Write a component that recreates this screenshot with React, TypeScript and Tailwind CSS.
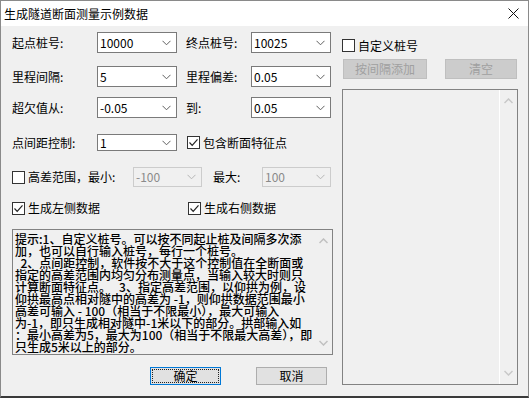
import React from "react";

const FONT = { fontFamily: '"Noto Sans CJK SC", "Noto Sans", sans-serif' };

function Chevron({ color = "#606060" }: { color?: string }) {
  return (
    <svg width="9" height="6" viewBox="0 0 9 6" className="shrink-0">
      <polyline points="0.5,0.8 4.5,4.8 8.5,0.8" fill="none" stroke={color} strokeWidth="1" />
    </svg>
  );
}

function Combo({ value, cls, disabled = false }: { value: string; cls: string; disabled?: boolean }) {
  return (
    <div
      className={
        "flex items-center justify-between pl-[2px] pr-[5px] border text-[12px] leading-none shrink-0 " +
        (disabled ? "border-[#cccccc] bg-[#f0f0f0] text-[#8a8a8a]" : "border-[#7a7a7a] bg-white text-black") +
        " " +
        cls
      }
    >
      <span>{value}</span>
      <Chevron color={disabled ? "#b5b5b5" : "#606060"} />
    </div>
  );
}

function Check({ checked }: { checked: boolean }) {
  return (
    <div className="w-[13px] h-[13px] border border-[#333333] bg-white flex items-center justify-center shrink-0">
      {checked && (
        <svg width="11" height="11" viewBox="0 0 11 11">
          <polyline points="1.5,5.5 4.2,8.3 9.5,2.3" fill="none" stroke="#222222" strokeWidth="1.2" />
        </svg>
      )}
    </div>
  );
}

function CheckLabel({ checked, text, cls = "" }: { checked: boolean; text: string; cls?: string }) {
  return (
    <div className={"flex items-center gap-[3px] text-[12px] leading-none text-black " + cls}>
      <Check checked={checked} />
      <span>{text}</span>
    </div>
  );
}

const tipLines = [
  "提示:1、自定义桩号。可以按不同起止桩及间隔多次添",
  "加，也可以自行输入桩号，每行一个桩号。",
  "  2、点间距控制，软件按不大于这个控制值在全断面或",
  "指定的高差范围内均匀分布测量点，当输入较大时则只",
  "计算断面特征点。   3、指定高差范围，以仰拱为例，设",
  "仰拱最高点相对隧中的高差为 -1，则仰拱数据范围最小",
  "高差可输入 - 100（相当于不限最小），最大可输入",
  "为-1，即只生成相对隧中-1米以下的部分。拱部输入如",
  "：最小高差为5，最大为100（相当于不限最大高差），即",
  "只生成5米以上的部分。",
];

export default function App() {
  return (
    <div
      className="w-[529px] h-[398px] bg-[#f0f0f0] border border-[#8a8a8a] border-b-[#3a3a3a] border-b-2 flex flex-col overflow-hidden"
      style={FONT}
    >
      {/* title bar */}
      <div className="h-[25px] bg-white flex items-center justify-between pl-[3px] pr-[9px] shrink-0">
        <span className="text-[12px] text-black leading-none">生成隧道断面测量示例数据</span>
        <svg width="11" height="11" viewBox="0 0 11 11">
          <line x1="0.5" y1="0.5" x2="10.5" y2="10.5" stroke="#111" strokeWidth="1" />
          <line x1="10.5" y1="0.5" x2="0.5" y2="10.5" stroke="#111" strokeWidth="1" />
        </svg>
      </div>

      {/* body */}
      <div className="flex flex-1">
        {/* left column */}
        <div className="w-[331px] pl-[11px] pt-[6px] flex flex-col text-[12px] text-black">
          <div className="flex items-center h-[21px]">
            <span className="w-[85px]">起点桩号:</span>
            <Combo value="10000" cls="w-[80px] h-[21px]" />
            <span className="w-[74px] pl-[9px]">终点桩号:</span>
            <Combo value="10025" cls="w-[80px] h-[21px]" />
          </div>
          <div className="flex items-center h-[21px] mt-[13px]">
            <span className="w-[85px]">里程间隔:</span>
            <Combo value="5" cls="w-[80px] h-[21px]" />
            <span className="w-[74px] pl-[9px]">里程偏差:</span>
            <Combo value="0.05" cls="w-[80px] h-[21px]" />
          </div>
          <div className="flex items-center h-[21px] mt-[10px]">
            <span className="w-[85px]">超欠值从:</span>
            <Combo value="-0.05" cls="w-[80px] h-[21px]" />
            <span className="w-[74px] pl-[9px]">到:</span>
            <Combo value="0.05" cls="w-[80px] h-[21px]" />
          </div>
          <div className="flex items-center h-[17px] mt-[16px]">
            <span className="w-[85px]">点间距控制:</span>
            <Combo value="1" cls="w-[80px] h-[17px]" />
            <CheckLabel checked text="包含断面特征点" cls="ml-[10px]" />
          </div>
          <div className="flex items-center h-[20px] mt-[16px]">
            <CheckLabel checked={false} text="高差范围，最小:" cls="w-[121px]" />
            <Combo value="-100" disabled cls="w-[69px] h-[20px]" />
            <span className="w-[60px] pl-[11px]">最大:</span>
            <Combo value="100" disabled cls="w-[69px] h-[20px]" />
          </div>
          <div className="flex items-center h-[14px] mt-[14px]">
            <CheckLabel checked text="生成左侧数据" cls="w-[176px]" />
            <CheckLabel checked text="生成右侧数据" />
          </div>
          <div className="mt-[14px] w-[321px] h-[126px] border border-[#828282] bg-[#f0f0f0] flex">
            <div className="flex-1 pl-[2px] pt-[3px] overflow-hidden">
              {tipLines.map((l, i) => (
                <div key={i} className="whitespace-pre text-[12px] leading-[12px] font-medium text-black">
                  {l}
                </div>
              ))}
            </div>
            <div className="w-[17px] flex flex-col items-center justify-between py-[8px]">
              <svg width="9" height="6" viewBox="0 0 9 6">
                <polyline points="0.5,5 4.5,1 8.5,5" fill="none" stroke="#c0c0c0" strokeWidth="1.5" />
              </svg>
              <svg width="9" height="6" viewBox="0 0 9 6">
                <polyline points="0.5,1 4.5,5 8.5,1" fill="none" stroke="#c0c0c0" strokeWidth="1.5" />
              </svg>
            </div>
          </div>
          <div className="flex mt-[12px] pl-[138px] gap-[35px]">
            <div className="w-[71px] h-[18px] border border-[#0078d7] bg-[#e1e1e1] p-[1px]">
              <div className="w-full h-full border border-dotted border-[#222] flex items-center justify-center text-[12px] leading-none">
                确定
              </div>
            </div>
            <div className="w-[71px] h-[18px] border border-[#adadad] bg-[#e1e1e1] flex items-center justify-center text-[12px] leading-none">
              取消
            </div>
          </div>
        </div>

        {/* right column */}
        <div className="flex flex-col pl-[10px] pt-[13px]">
          <CheckLabel checked={false} text="自定义桩号" cls="h-[13px]" />
          <div className="flex mt-[7px] pl-[1px] gap-[18px]">
            <div className="w-[84px] h-[20px] bg-[#cccccc] border border-[#bfbfbf] flex items-center justify-center text-[12px] text-[#a0a0a0] leading-none">
              按间隔添加
            </div>
            <div className="w-[72px] h-[20px] bg-[#cccccc] border border-[#bfbfbf] flex items-center justify-center text-[12px] text-[#a0a0a0] leading-none">
              清空
            </div>
          </div>
          <div className="mt-[10px] w-[176px] h-[296px] border border-[#828282] bg-[#f0f0f0] flex">
            <div className="flex-1 border-r border-white" />
            <div className="w-[17px] flex flex-col items-center justify-between py-[8px]">
              <svg width="9" height="6" viewBox="0 0 9 6">
                <polyline points="0.5,5 4.5,1 8.5,5" fill="none" stroke="#c8c8c8" strokeWidth="1.5" />
              </svg>
              <svg width="9" height="6" viewBox="0 0 9 6">
                <polyline points="0.5,1 4.5,5 8.5,1" fill="none" stroke="#c8c8c8" strokeWidth="1.5" />
              </svg>
            </div>
          </div>
        </div>
      </div>
    </div>
  );
}
